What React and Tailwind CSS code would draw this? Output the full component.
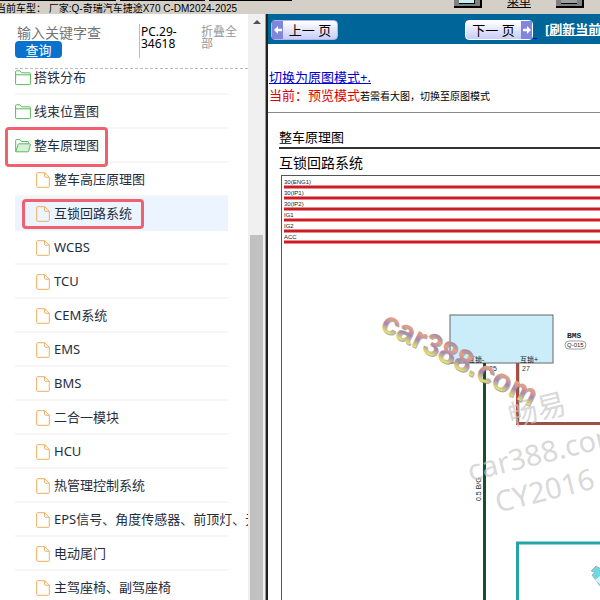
import { useState } from "react";

const folders = [
  { id: "ground", label: "搭铁分布" },
  { id: "harness", label: "线束位置图" },
  { id: "schematic", label: "整车原理图", open: true, marked: true },
];

const documents = [
  { id: "hv", label: "整车高压原理图" },
  { id: "interlock", label: "互锁回路系统", marked: true },
  { id: "wcbs", label: "WCBS" },
  { id: "tcu", label: "TCU" },
  { id: "cem", label: "CEM系统" },
  { id: "ems", label: "EMS" },
  { id: "bms", label: "BMS" },
  { id: "two-in-one", label: "二合一模块" },
  { id: "hcu", label: "HCU" },
  { id: "thermal", label: "热管理控制系统" },
  { id: "eps", label: "EPS信号、角度传感器、前顶灯、无" },
  { id: "tailgate", label: "电动尾门" },
  { id: "seats", label: "主驾座椅、副驾座椅" },
];

const rails = [
  { name: "30(ENG1)", y: 12 },
  { name: "30(IP1)", y: 23 },
  { name: "30(IP2)", y: 34 },
  { name: "IG1", y: 45 },
  { name: "IG2", y: 56 },
  { name: "ACC", y: 67 },
];

const FolderIcon = ({ open }) => (
  <svg
    className="h-4 w-4 shrink-0"
    viewBox="0 0 16 16"
    fill="none"
    stroke="#5cb85c"
    strokeLinejoin="round">
    {open ? (
      <>
        <path d="M.7 13.500V2.200Q.7 1.500 1.400 1.500H5l1.500 2h6.300q.7 0 .7.7v1.600" />
        <path
          d="M.8 13.800 3 6.600q.2-.8 1-.8h10.800q.8 0 .6.8l-1.700 6.400q-.2.8-1 .8Z"
          fill="#d8f0d8"
        />
      </>
    ) : (
      <>
        <path d="M.6 13.900V1.500Q.6.8 1.300.8H5l1.600 2h8q.8 0 .8.8v10.300q0 .7-.8.7H1.300q-.7 0-.7-.7Z" />
        <path d="M.6 4.800h14.800" />
      </>
    )}
  </svg>
);

const FileIcon = () => (
  <svg
    className="h-4 w-3.5 shrink-0"
    viewBox="0 0 14 16"
    fill="none"
    stroke="#f0ad60"
    strokeLinejoin="round">
    <path d="M.7 14.600V1.400Q.7.7 1.400.7h7.400l4.500 4.400v9.500q0 .7-.7.7H1.400q-.7 0-.7-.7Z" />
    <path d="M8.600.8v3.600q0 .8.8.8h3.800" />
  </svg>
);

const TopBar = () => (
  <header className="relative flex h-3.5 shrink-0 items-end overflow-hidden bg-[#d4d0c8] font-['Liberation_Sans','Noto_Sans_CJK_SC',sans-serif]">
    <div className="absolute top-0 left-0 flex h-px w-[292px] gap-1">
      <span className="w-[116px] bg-black" />
      <span className="w-[85px] bg-black" />
      <span className="flex-1 bg-black" />
    </div>
    <p className="-ml-1 w-[458px] shrink-0 text-[10px] leading-[10px] whitespace-nowrap text-black">
      当前车型： 厂家:Q-奇瑞汽车捷途X70 C-DM2024-2025
    </p>
    <div className="flex w-[130px] shrink-0 items-start justify-between self-start">
      <button
        aria-label="打印"
        className="flex h-2 w-7 justify-center border-r-2 border-b-2 border-black bg-[#808080]">
        <span className="h-1 w-4 border-r border-b border-black bg-[#c5f0f5]" />
      </button>
      <a
        href="#menu"
        className="-mt-1 text-[12px] leading-3 text-black underline">
        菜单
      </a>
      <button
        aria-label="退出"
        className="flex h-2 w-7 justify-center border-r-2 border-b-2 border-black bg-[#808080]">
        <span className="h-1 w-4 border-b border-black bg-[#a0a0a0]" />
      </button>
    </div>
  </header>
);

const SearchBar = () => {
  const [keyword, setKeyword] = useState("");

  return (
    <form
      onSubmit={(e) => e.preventDefault()}
      className="ml-[15px] flex h-[55px] shrink-0 items-start border-b border-dashed border-[#bbb] pt-2.5">
      <div className="w-[124px]">
        <input
          type="text"
          aria-label="关键字"
          placeholder="输入关键字查询"
          value={keyword}
          onChange={(e) => setKeyword(e.target.value)}
          className="ml-0.5 block h-[17px] w-[84px] text-[14px] leading-4 outline-none placeholder:text-[#757575]"
        />
        <button
          type="submit"
          className="block h-[17px] w-[47px] rounded-sm bg-[#0a72cc] text-[13px] leading-4 text-white">
          查询
        </button>
      </div>
      <p className="h-[34px] w-[62px] border-l border-[#bbb] pt-0.5 pl-px text-[12px] leading-3 text-black">
        PC.29-
        <br />
        34618
      </p>
      <button
        type="button"
        className="w-10 pt-0.5 text-left text-[12px] leading-3 text-[#999]">
        折叠全部
      </button>
    </form>
  );
};

const TreeRow = ({ item, selected, onSelect, nested }) => (
  <li
    className={
      selected
        ? "relative h-[34px] bg-[#ecf5ff]"
        : "relative h-[34px] border-b-2 border-[#f6f6f6]"
    }>
    <button
      onClick={onSelect}
      className={
        nested
          ? "flex h-[34px] items-center gap-1 pl-[21px] text-[13px] whitespace-nowrap"
          : "flex h-[34px] items-center gap-[3px] text-[13px] whitespace-nowrap"
      }>
      {nested ? <FileIcon /> : <FolderIcon open={item.open} />}
      {item.label}
    </button>
    {item.marked && (
      <span
        className={
          nested
            ? "pointer-events-none absolute top-0.5 left-[7px] h-[30px] w-[122px] rounded-sm border-3 border-[#f0606f]"
            : "pointer-events-none absolute -top-0.5 -left-2.5 h-10 w-[103px] rounded-sm border-3 border-[#f0606f]"
        }
      />
    )}
  </li>
);

const Sidebar = ({ selected, onSelect }) => (
  <aside className="flex w-[268px] shrink-0 border-r-2 border-[#222]">
    <div className="flex min-w-0 flex-1 flex-col">
      <SearchBar />
      <nav className="min-h-0 flex-1 overflow-hidden pr-5 pl-[15px] text-[#1f2d3d]">
        <ul className="-mt-2">
          {folders.map((item) => (
            <TreeRow key={item.id} item={item} />
          ))}
          {documents.map((item) => (
            <TreeRow
              key={item.id}
              item={item}
              nested
              selected={item.id === selected}
              onSelect={() => onSelect(item.id)}
            />
          ))}
        </ul>
      </nav>
    </div>
    {/* Scrollbar */}
    <div className="flex w-[18px] shrink-0 flex-col items-center border-r border-[#999] bg-[#f0f0f0]">
      <svg className="mt-1.5 h-1 w-2 shrink-0" viewBox="0 0 8 4" fill="#505050">
        <path d="M0 4 4 0l4 4Z" />
      </svg>
      <div className="mt-[211px] w-[13px] flex-1 bg-[#c1c1c1]" />
    </div>
  </aside>
);

const PagerArrow = ({ left }) => (
  <span className="flex h-full w-[11px] shrink-0 items-center justify-center bg-[#7f86dc]">
    <svg className="h-2 w-2" viewBox="0 0 8 8" fill="#fff">
      {left ? (
        <path d="M0 4 4 0v2.700h4v2.600H4V8Z" />
      ) : (
        <path d="M8 4 4 0v2.700H0v2.600h4V8Z" />
      )}
    </svg>
  </span>
);

const Pager = () => (
  <div className="flex h-[30px] shrink-0 items-center overflow-hidden bg-[#006699] pt-0.5 pl-[3px]">
    <button className="flex h-5 w-[67px] shrink-0 items-center rounded-sm border border-[#b0b4f0] bg-gradient-to-b from-white to-[#c8cdf5]">
      <PagerArrow left />
      <span className="flex-1 text-[13px] leading-4 whitespace-nowrap text-black">
        上一 页
      </span>
    </button>
    <button className="ml-[127px] flex h-5 w-[68px] shrink-0 items-center rounded-sm border border-white bg-gradient-to-b from-white to-[#c8cdf5]">
      <span className="flex-1 text-[13px] leading-4 whitespace-nowrap text-black">
        下一 页
      </span>
      <PagerArrow />
    </button>
    <span className="mt-4 h-px w-1 shrink-0 bg-[#0000cc]" />
    <a
      href="#refresh"
      className="ml-2 shrink-0 text-[13px] font-bold whitespace-nowrap text-white underline">
      [刷新当前页]
    </a>
  </div>
);

const Diagram = () => (
  <svg className="block min-h-0 w-full flex-1" aria-label="互锁回路系统">
    <defs>
      <linearGradient
        id="rainbow"
        x1="0"
        y1="-23"
        x2="0"
        y2="0"
        gradientUnits="userSpaceOnUse">
        <stop offset="0" stopColor="#9a86a8" />
        <stop offset=".35" stopColor="#e5a080" />
        <stop offset=".65" stopColor="#a886b0" />
        <stop offset="1" stopColor="#e6e66c" />
      </linearGradient>
    </defs>

    <rect x="2.500" y=".5" width="120%" height="120%" fill="none" stroke="#555" />

    {rails.map((rail) => (
      <g key={rail.name}>
        <text x="5" y={rail.y - 3} fontSize="6" fill="#222">
          {rail.name}
        </text>
        <rect x="5" y={rail.y - 2} width="100%" height="4" fill="#ee8a8c" />
        <rect x="5" y={rail.y - 1} width="100%" height="2" fill="#c81e28" />
      </g>
    ))}

    {/* BMS block */}
    <rect x="171" y="140" width="103" height="48" fill="#cbedfa" stroke="#666" />
    <text
      x="288"
      y="163"
      fontSize="8"
      fontWeight="700"
      fontFamily="'Liberation Mono', monospace"
      fill="#222">
      BMS
    </text>
    <rect x="286" y="166" width="21" height="8" rx="4" fill="none" stroke="#777" strokeWidth=".7" />
    <text x="288" y="172" fontSize="6" fill="#222">
      Q-015
    </text>
    <text x="189" y="187" fontSize="7" fill="#111">
      互锁-
    </text>
    <text x="241" y="187" fontSize="7" fill="#111">
      互锁+
    </text>
    <text x="210" y="196" fontSize="7" fill="#333">
      25
    </text>
    <text x="243" y="196" fontSize="7" fill="#333">
      27
    </text>

    {/* Wires */}
    <rect x="204" y="188" width="3" height="100%" fill="#17502c" />
    <path d="M238.500 188v60.500H900" fill="none" stroke="#c4443a" strokeWidth="3" />
    <path d="M239.500 188v60H900" fill="none" stroke="#7d5a4c" strokeWidth="1.500" />
    <text transform="translate(202 326) rotate(-90)" fontSize="7" fill="#222">
      0.5 B/G
    </text>
    <rect x="238.500" y="368" width="120%" height="120%" fill="none" stroke="#22a4a9" strokeWidth="3" />
    <path
      d="m312 396 5-5 10 6v22l-14-19 3-3Z"
      fill="#6cd9e4"
      stroke="#9aa8ac"
      strokeWidth=".8"
    />
    <path d="m321 401-5 4 5 4Z" fill="#d8f6fa" />

    {/* Watermarks */}
    <g
      transform="translate(220 255) rotate(-14)"
      fill="#c8c8c8"
      fillOpacity=".7"
      fontFamily="'Noto Sans', 'Noto Sans CJK SC', sans-serif"
      fontSize="29">
      <text x="13" y="0">畅易</text>
      <text x="-40" y="43">car388.com</text>
      <text x="-21" y="80">CY2016</text>
    </g>
    <g
      transform="translate(100 154) rotate(27)"
      fontFamily="'Liberation Sans', sans-serif"
      fontSize="31"
      fontWeight="700">
      <text x="1" y="1" fill="#777" fillOpacity=".6">
        car388.com
      </text>
      <text fill="url(#rainbow)">car388.com</text>
    </g>
  </svg>
);

const App = () => {
  const [selected, setSelected] = useState("interlock");

  return (
    <div className="flex h-screen flex-col overflow-hidden bg-white font-['Noto_Sans','Noto_Sans_CJK_SC',sans-serif]">
      <TopBar />
      <div className="flex min-h-0 flex-1">
        <Sidebar selected={selected} onSelect={setSelected} />

        <main className="flex min-w-0 flex-1 flex-col">
          <Pager />
          <div className="border-b border-[#888] pt-6 pb-[7px] pl-px text-[13px] leading-[18px] whitespace-nowrap">
            <a href="#original" className="text-[#0000cc] underline">
              切换为原图模式+.
            </a>
            <p className="text-[#e00000]">
              当前：预览模式
              <span className="text-[10px] text-black">
                若需看大图，切换至原图模式
              </span>
            </p>
          </div>

          <article className="flex min-h-0 flex-1 flex-col pt-4 pl-[11px] font-['Liberation_Sans','Noto_Sans_CJK_SC',sans-serif] text-black">
            <h1 className="h-5 border-b-2 border-[#333] text-[13px] leading-[18px]">
              整车原理图
            </h1>
            <h2 className="h-[26px] pt-1 text-[14px] leading-5">
              互锁回路系统
            </h2>
            <Diagram />
          </article>
        </main>
      </div>
    </div>
  );
};

export default App;
